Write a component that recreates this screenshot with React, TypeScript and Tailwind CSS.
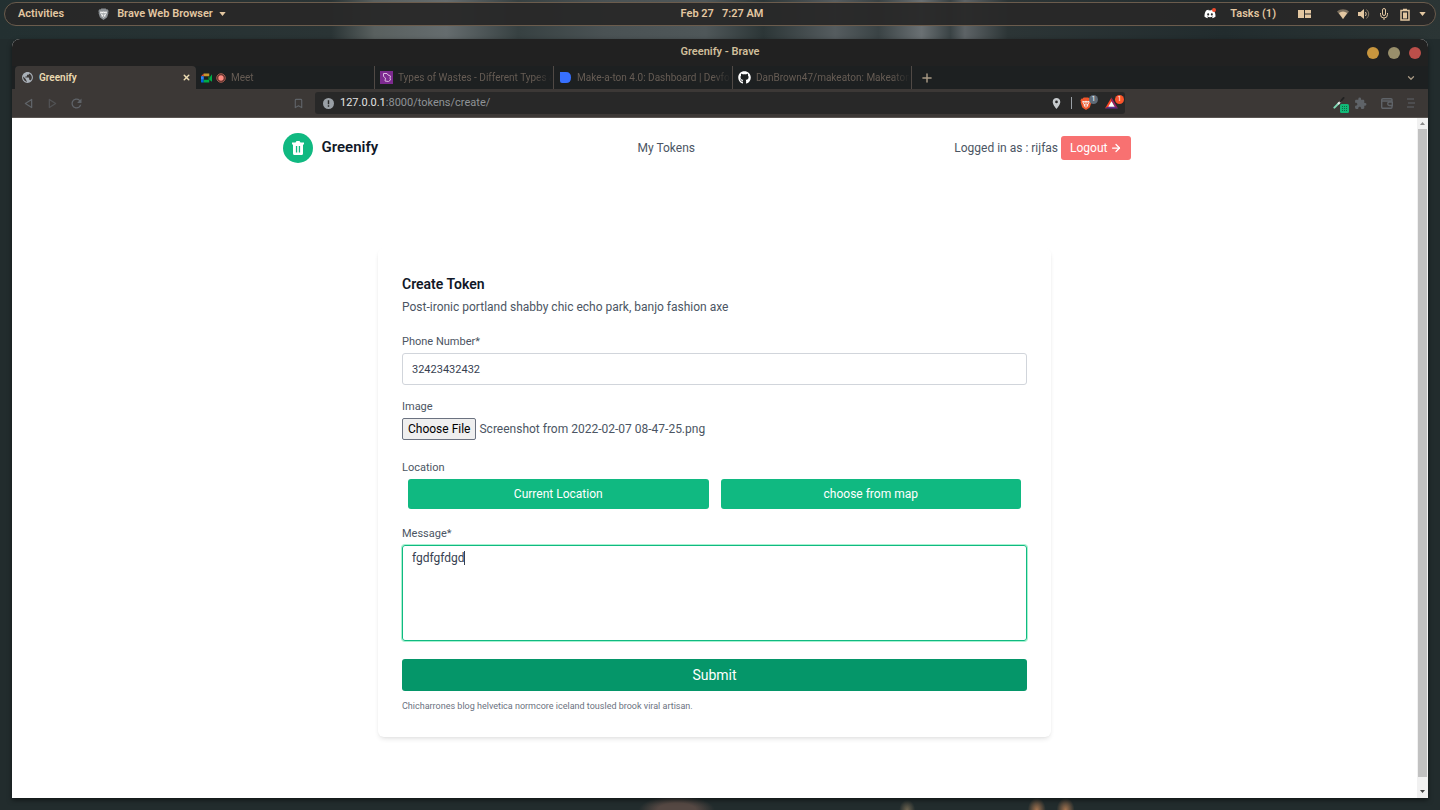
import { useEffect, useRef, useState } from "react";
import type { ReactNode } from "react";
import { ArrowRight, Bookmark, ChevronDown, Plus, X } from "lucide-react";
import { FaDiscord, FaGithub } from "react-icons/fa";
import { MdExtension, MdLocationOn, MdPublic, MdRefresh } from "react-icons/md";

function BraveShield({ className, color, face }: { className: string; color: string; face: string }) {
  return (
    <svg viewBox="0 0 24 28" className={className} aria-hidden="true">
      <path d="M7 1h10l2.500 2.500 2-.5L24 7l-1 3 .5 2-3 9.500c-.5 1.500-6 4.500-8.500 6.500-2.500-2-8-5-8.500-6.500L.5 12 1 10 0 7l2.500-4 2 .5z" fill={color} />
      <path d="M4.500 8 9 9l3-1 3 1 4.500-1 .5 3-3.500 6 .5 2.500-5 3.500-5-3.500.5-2.500L4 11z" fill={face} />
      <path d="m7 12 3 1-.5 2zm10 0-3 1 .5 2zM12 11v7l-2 2h4l-2-2z" fill={color} stroke={color} strokeWidth="1" />
    </svg>
  );
}

function StatusIcons() {
  return (
    <div className="flex items-center text-[#e3c7a1]">
      <svg viewBox="0 0 12 10" className="h-[10px] w-3" fill="currentColor" aria-hidden="true">
        <path d="M0 2.500C3.500-.5 8.500-.5 12 2.500L6 10z" opacity=".45" />
        <path d="M1.800 4C4.500 2 7.500 2 10.200 4L6 10z" />
      </svg>
      <svg viewBox="0 0 12 12" className="ml-[9px] h-3 w-3" aria-hidden="true">
        <path d="M0 4h2.500L6 1v10L2.500 8H0z" fill="currentColor" />
        <path d="M7.500 4q1.500 2 0 4" fill="none" stroke="currentColor" />
        <path d="M8.500 1.500q4.500 4.500 0 9" fill="none" stroke="currentColor" opacity=".5" />
      </svg>
      <svg viewBox="0 0 10 14" className="ml-[9px] h-[14px] w-[10px]" fill="none" stroke="currentColor" aria-hidden="true">
        <rect x="3.500" y="1.500" width="3" height="7" rx="1.500" />
        <path d="M1.500 6v1.500a3.500 3.500 0 0 0 7 0V6M5 11v2" />
      </svg>
      <svg viewBox="0 0 10 13" className="ml-[11px] h-[13px] w-[10px]" aria-hidden="true">
        <path d="M3 1.500h4M1 2.500h8v9.500H1z" fill="none" stroke="currentColor" strokeWidth="1.500" />
        <path d="M3 4.500h4v6H3z" fill="currentColor" />
      </svg>
      <svg viewBox="0 0 8 5" className="ml-[9px] h-[4px] w-[7px]" fill="currentColor" aria-hidden="true">
        <path d="M0 0h8L4 5z" />
      </svg>
    </div>
  );
}

function TopPanel() {
  return (
    <header className="mx-1 mt-[2px] grid h-6 grid-cols-[1fr_auto_1fr] items-center rounded-full border border-[#6b5c4d] bg-[#282828]/95 pr-[9px] pl-[13px] text-[11px] font-semibold text-[#e3c7a1]">
      <div className="flex items-center">
        <button type="button">Activities</button>
        <button type="button" className="ml-[34px] flex items-center">
          <BraveShield className="h-3 w-[11px]" color="#8a8f93" face="#f3f3f3" />
          <span className="ml-2">Brave Web Browser</span>
          <svg viewBox="0 0 8 5" className="ml-[6px] h-[4px] w-[7px]" fill="currentColor" aria-hidden="true">
            <path d="M0 0h8L4 5z" />
          </svg>
        </button>
      </div>
      <button type="button" className="flex gap-2">
        <span>Feb 27</span>
        <span>7:27 AM</span>
      </button>
      <div className="flex items-center justify-end">
        <span className="relative">
          <FaDiscord className="h-3 w-3 text-white" />
          <span className="absolute top-0 right-0 h-1 w-1 rounded-full bg-[#f04a2c]" />
        </span>
        <span className="ml-[14px]">Tasks (1)</span>
        <svg viewBox="0 0 13 8" className="mr-[26px] ml-[22px] h-2 w-[13px]" fill="currentColor" aria-hidden="true">
          <path d="M0 0h6v8H0zM7 0h6v3.500H7zM7 4.500h6V8H7z" />
        </svg>
        <StatusIcons />
      </div>
    </header>
  );
}

type TabProps = { icon: ReactNode; title: string };

function Tab({ icon, title }: TabProps) {
  return (
    <button type="button" className="flex h-[23px] w-[179px] items-center border-r border-[#504945] pr-px pl-[5px] text-left">
      {icon}
      <span className="ml-[5px] flex-1 overflow-hidden whitespace-nowrap text-[#665c54] [mask-image:linear-gradient(to_right,black_88%,transparent)]">
        {title}
      </span>
    </button>
  );
}

function TabBar() {
  return (
    <div className="flex h-[23px] items-center bg-[#1d2021] pr-3 pl-[3px] text-[10px]">
      <div className="flex h-[23px] w-[181px] items-center rounded-t bg-[#3c3836] pr-[5px] pl-[6px] font-semibold text-[#ebdbb2]">
        <MdPublic className="h-[13px] w-[13px] text-[#a9b0b8]" />
        <span className="ml-[5px] flex-1">Greenify</span>
        <button type="button" aria-label="Close tab">
          <X size={9} strokeWidth={4} />
        </button>
      </div>
      <Tab
        title="Meet"
        icon={
          <span className="flex items-center gap-1">
            <svg viewBox="0 0 12 10" className="h-[10px] w-[11px]" aria-hidden="true">
              <path d="M0 3 3 0v3z" fill="#ea4335" />
              <path d="M3 0h6v3H3z" fill="#c8962e" />
              <path d="M0 3h3v4H0z" fill="#2684fc" />
              <path d="M0 7h3v3H1q-1 0-1-1z" fill="#0066da" />
              <path d="M3 7h6v3H3zM9 5l3-4v8L9 7z" fill="#00ac47" />
              <path d="M8 3h1v4H8z" fill="#00832d" />
            </svg>
            <svg viewBox="0 0 10 10" className="h-[10px] w-[10px]" aria-hidden="true">
              <circle cx="5" cy="5" r="4.300" fill="#5a2d28" stroke="#a15b50" />
              <circle cx="5" cy="5" r="2.700" fill="#ff8a80" />
            </svg>
          </span>
        }
      />
      <Tab
        title="Types of Wastes - Different Types a"
        icon={
          <svg viewBox="0 0 13 13" className="h-[13px] w-[13px]" aria-hidden="true">
            <path d="M0 0h13v13H0z" fill="#7d2a90" />
            <path d="M3.500 2.500H7L8 4l2.500 1-.5 2 .5 2L8.500 10.500 5 10 5.500 7 3.500 5.500z" fill="none" stroke="#d9b8e0" />
          </svg>
        }
      />
      <Tab
        title="Make-a-ton 4.0: Dashboard | Devfo"
        icon={
          <svg viewBox="0 0 13 13" className="h-[13px] w-[13px]" aria-hidden="true">
            <path d="M1 1h6q5 0 5 5.500T7 12H3q-2 0-2-2z" fill="#3770ff" />
          </svg>
        }
      />
      <Tab title="DanBrown47/makeaton: Makeaton" icon={<FaGithub className="h-[13px] w-[13px] text-white" />} />
      <button type="button" className="ml-2" aria-label="New tab">
        <Plus size={14} strokeWidth={2.500} className="text-[#a89984]" />
      </button>
      <button type="button" className="ml-auto" aria-label="Search tabs">
        <ChevronDown size={10} strokeWidth={3} className="text-[#a89984]" />
      </button>
    </div>
  );
}

function Toolbar() {
  return (
    <div className="flex h-[29px] items-center border-b border-[#5a5552] bg-[#3c3836] text-[#5f6368]">
      <div className="flex w-[303px] items-center pr-[11px] pl-3">
        <button type="button" aria-label="Back">
          <svg viewBox="0 0 10 12" className="h-[11px] w-[9px]" fill="none" stroke="currentColor" strokeWidth="1.400" aria-hidden="true">
            <path d="M8.500 1.500v9L1.500 6z" strokeLinejoin="round" />
          </svg>
        </button>
        <button type="button" className="ml-[15px] opacity-60" aria-label="Forward">
          <svg viewBox="0 0 10 12" className="h-[11px] w-[9px]" fill="none" stroke="currentColor" strokeWidth="1.400" aria-hidden="true">
            <path d="M1.500 1.500v9l7-4.500z" strokeLinejoin="round" />
          </svg>
        </button>
        <button type="button" className="ml-3" aria-label="Reload">
          <MdRefresh size={15} />
        </button>
        <button type="button" className="ml-auto" aria-label="Bookmark this tab">
          <Bookmark size={11} strokeWidth={2.500} />
        </button>
      </div>
      <div className="flex h-[22px] flex-1 items-center rounded-[3px] bg-[#282828] pr-[1px] pl-2">
        <svg viewBox="0 0 12 12" className="h-[11px] w-[11px]" aria-hidden="true">
          <circle cx="6" cy="6" r="6" fill="#9aa0a6" />
          <path d="M5.200 2.500h1.600v4.300H5.200zM5.200 8h1.600v1.600H5.200z" fill="#282828" />
        </svg>
        <div className="ml-[6px] flex-1 text-[11px] text-[#8f9396]">
          <span className="text-[#e3e3e3]">127.0.0.1</span>:8000/tokens/create/
        </div>
        <MdLocationOn className="h-[13px] w-[13px] text-[#c6cacd]" />
        <span className="ml-2 h-3 w-px bg-[#9aa0a6]" />
        <button type="button" className="relative ml-2 flex w-[18px]" aria-label="Brave Shields">
          <BraveShield className="h-[13px] w-3" color="#f1562b" face="#f7e9e4" />
          <span className="absolute -top-[2px] right-0 flex h-[9px] w-[9px] items-center justify-center rounded-full bg-[#5f6b78] text-[7px] text-white">
            1
          </span>
        </button>
        <button type="button" className="relative ml-[7px] flex w-[19px]" aria-label="Brave Rewards">
          <svg viewBox="0 0 14 12" className="h-3 w-[13px]" aria-hidden="true">
            <path d="M7 0 0 12l7-4z" fill="#ff4724" />
            <path d="M7 0v4l3.500 6L14 12z" fill="#9e1f63" />
            <path d="m0 12 3.500-2h7l3.500 2z" fill="#662d91" />
            <path d="m7 4 3.500 6h-7z" fill="#fff" />
          </svg>
          <span className="absolute -top-[2px] right-0 flex h-[9px] w-[9px] items-center justify-center rounded-full bg-[#fb542b] text-[7px] text-white">
            1
          </span>
        </button>
      </div>
      <div className="flex w-[303px] items-center justify-end gap-[14px] pr-[13px]">
        <button type="button" className="relative -mr-[5px]" aria-label="Color picker">
          <svg viewBox="0 0 13 13" className="h-3 w-3" strokeLinecap="round" aria-hidden="true">
            <path d="m1.500 11.500 5-5" stroke="#7fd8b4" strokeWidth="2.200" />
            <path d="m6 7 2-2" stroke="#e6e6e6" strokeWidth="2.200" />
            <path d="m8 5 3.500-4" stroke="#222" strokeWidth="2" />
          </svg>
          <svg viewBox="0 0 9 9" className="absolute -right-1 -bottom-1 h-[9px] w-[9px]" aria-hidden="true">
            <rect width="9" height="9" rx="1.500" fill="#12b877" />
            <path d="M2 2.500h5M2 4.500h5M2 6.500h5" stroke="#0b6b47" strokeDasharray="1 1" />
          </svg>
        </button>
        <button type="button" aria-label="Extensions">
          <MdExtension className="h-[13px] w-[13px]" />
        </button>
        <button type="button" aria-label="Wallet">
          <svg viewBox="0 0 12 11" className="h-[11px] w-3" fill="none" stroke="currentColor" strokeWidth="1.400" aria-hidden="true">
            <path d="M11 3V1.700q0-1-1-1H2q-1.300 0-1.300 1.300v7Q.7 10.300 2 10.300h8q1 0 1-1V8M.7 3H11" />
            <path d="M11.300 4v3.500H8.500a1.700 1.700 0 0 1 0-3.500z" />
          </svg>
        </button>
        <button type="button" aria-label="Menu">
          <svg viewBox="0 0 8 10" className="h-[10px] w-2" stroke="currentColor" strokeWidth="1.200" aria-hidden="true">
            <path d="M0 1h7M1 5h7M0 9h7" />
          </svg>
        </button>
      </div>
    </div>
  );
}

function PageScrollbar() {
  return (
    <div className="flex w-[11px] flex-col items-center bg-[#f1f1f1]" aria-hidden="true">
      <svg viewBox="0 0 11 11" className="h-[11px] w-[11px]">
        <path d="M3 7h5L5.500 4z" fill="#8a8a8a" />
      </svg>
      <div className="w-[9px] flex-1 bg-[#c1c1c1]" />
      <svg viewBox="0 0 11 21" className="h-[21px] w-[11px]">
        <path d="M3 13h5l-2.500 3z" fill="#404040" />
      </svg>
    </div>
  );
}

function SiteHeader() {
  return (
    <header className="mx-auto flex w-full max-w-[864px] items-center py-[15px] pr-4 text-xs text-[#4b5563]">
      <a href="#" className="flex items-center text-[#111827]">
        <span className="flex h-[30px] w-[30px] items-center justify-center rounded-full bg-[#10b981]">
          <svg viewBox="0 0 12 14" className="h-[14px] w-3" aria-hidden="true">
            <path d="M0 1.500h3.500L4.500 0h3l1 1.500H12v2H0z" fill="#fff" />
            <path
              d="M1 3h10v9.500q0 1.500-1.500 1.500h-7Q1 14 1 12.500zM3.900 5v6.500h1.300V5zm2.900 0v6.500h1.300V5z"
              fill="#fff"
              fillRule="evenodd"
            />
          </svg>
        </span>
        <span className="ml-[9px] text-[15px] font-semibold">Greenify</span>
      </a>
      <nav className="mx-auto">
        <a href="#">My Tokens</a>
      </nav>
      <span>Logged in as : rijfas</span>
      <button type="button" className="ml-[3px] flex h-6 items-center rounded-[3px] bg-[#f87171] px-[9px] text-white">
        Logout
        <ArrowRight size={12} strokeWidth={2.500} className="ml-[2px]" />
      </button>
    </header>
  );
}

function TokenForm() {
  const [phone, setPhone] = useState("32423432432");
  const [message, setMessage] = useState("fgdfgfdgd");
  const fileRef = useRef<HTMLInputElement>(null);

  // a file input has no value prop, so the attached file goes in through DataTransfer
  useEffect(() => {
    const transfer = new DataTransfer();
    transfer.items.add(new File([""], "Screenshot from 2022-02-07 08-47-25.png", { type: "image/png" }));
    if (fileRef.current) fileRef.current.files = transfer.files;
  }, []);

  return (
    <form
      className="mx-auto mt-[70px] flex w-full max-w-[673px] flex-col rounded-md bg-white p-6 pb-[23px] text-xs text-[#4b5563] shadow-[0_3px_5px_-1px_rgba(0,0,0,0.1),0_1px_3px_-1px_rgba(0,0,0,0.06)]"
      onSubmit={(e) => e.preventDefault()}
    >
      <h2 className="text-[14px] leading-6 font-semibold text-[#111827]">Create Token</h2>
      <p className="mb-[13px] leading-[22px]">Post-ironic portland shabby chic echo park, banjo fashion axe</p>

      <label htmlFor="phone" className="text-[11px] leading-[22px]">
        Phone Number*
      </label>
      <input
        id="phone"
        type="text"
        value={phone}
        onChange={(e) => setPhone(e.target.value)}
        className="mb-[11px] h-8 rounded-[3px] border border-[#d1d5db] px-[9px] text-[11px] text-[#374151] outline-none"
      />

      <label htmlFor="image" className="text-[11px] leading-[22px]">
        Image
      </label>
      <input
        id="image"
        ref={fileRef}
        type="file"
        className="mb-[17px] h-[22px] leading-[20px] file:mr-[3px] file:h-[22px] file:rounded-[2px] file:border file:border-solid file:border-[#6b7280] file:bg-[#efefef] file:px-[5px] file:text-black"
      />

      <span className="text-[11px] leading-[22px]">Location</span>
      <div className="mb-[14px] flex gap-3 px-[6px]">
        <button type="button" className="h-[30px] flex-1 rounded-[3px] bg-[#10b981] text-white">
          Current Location
        </button>
        <button type="button" className="h-[30px] flex-1 rounded-[3px] bg-[#10b981] text-white">
          choose from map
        </button>
      </div>

      <label htmlFor="message" className="text-[11px] leading-[22px]">
        Message*
      </label>
      <div className="relative mb-[18px] flex">
        <textarea
          id="message"
          value={message}
          onChange={(e) => setMessage(e.target.value)}
          className="h-24 flex-1 resize-none rounded-[3px] border border-[#10b981] px-[9px] py-[3px] leading-[18px] text-[#374151] ring-1 ring-[#a7f3d0] outline-none"
        />
        <span className="absolute top-[6px] left-[62px] h-[14px] w-px bg-[#374151]" aria-hidden="true" />
      </div>

      <button type="submit" className="h-8 rounded-[3px] bg-[#059669] text-[14px] text-white">
        Submit
      </button>
      <p className="mt-[7px] text-[9px] leading-4 text-[#6b7280]">
        Chicharrones blog helvetica normcore iceland tousled brook viral artisan.
      </p>
    </form>
  );
}

export default function App() {
  return (
    <div className="flex min-h-screen flex-col bg-[linear-gradient(90deg,#233031_0%,#2a3435_23%,#59605f_26%,#656c6e_31%,#374142_36%,#4a5254_42%,#4f5759_49%,#2c3637_53%,#555c5f_58%,#3a4345_61%,#6a7073_64%,#3a4345_66%,#5d6366_67%,#2c3536_70%,#222c2e_85%,#2b3535_100%)] bg-[length:100%_40px] bg-no-repeat font-[Roboto,'Noto_Sans',sans-serif]">
      <TopPanel />
      <div className="flex flex-1 flex-col bg-[radial-gradient(38px_14px_at_47%_100%,#554843_50%,transparent),radial-gradient(8px_10px_at_63%_100%,#6e6450,transparent),radial-gradient(9px_12px_at_72%_100%,#a5744f,transparent),radial-gradient(9px_12px_at_74%_100%,#a5744f,transparent),linear-gradient(transparent_13px,#222c2d_13px)] px-3 pt-[13px] pb-3">
        <div className="flex flex-1 flex-col overflow-hidden rounded-t-lg bg-white shadow-[0_2px_5px_rgba(0,0,0,0.5)]">
          <div className="grid h-[27px] grid-cols-[1fr_auto_1fr] items-center bg-[#212121] px-[7px]">
            <h1 className="col-start-2 text-[11px] font-semibold text-[#d0bf9b]">Greenify - Brave</h1>
            <div className="flex justify-end gap-[9px]">
              <button type="button" className="h-3 w-3 rounded-full bg-[#c8963e]" aria-label="Minimize" />
              <button type="button" className="h-3 w-3 rounded-full bg-[#998f6b]" aria-label="Maximize" />
              <button type="button" className="h-3 w-3 rounded-full bg-[#bc4f4a]" aria-label="Close" />
            </div>
          </div>
          <TabBar />
          <Toolbar />
          <div className="flex flex-1">
            <main className="flex-1 pb-6">
              <SiteHeader />
              <TokenForm />
            </main>
            <PageScrollbar />
          </div>
        </div>
      </div>
    </div>
  );
}
